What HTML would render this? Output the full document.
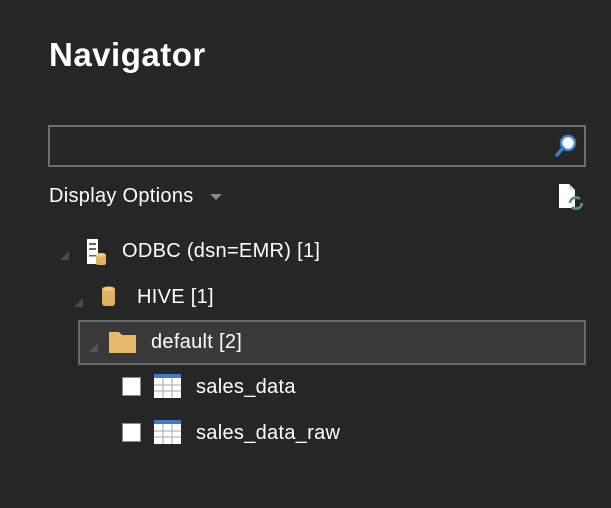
<!DOCTYPE html>
<html><head><meta charset="utf-8"><style>
body{margin:0;width:611px;height:508px;background:#262626;overflow:hidden;font-family:"Liberation Sans",sans-serif;color:#fff;position:relative}
.a{position:absolute}
.t{font-size:20px;white-space:nowrap;letter-spacing:0.3px}
.tri{position:absolute;width:0;height:0;border-left:9px solid transparent;border-bottom:9px solid #4a4a4a}
.cb{position:absolute;width:19px;height:19px;background:#fff;border:1px solid #888;box-sizing:border-box}
</style></head><body>
<div class="a" style="left:49px;top:36px;font-size:33px;font-weight:bold;letter-spacing:0.5px">Navigator</div>
<div class="a" style="left:48px;top:125px;width:538px;height:42px;border:2px solid #6e6e6e;box-sizing:border-box;background:#262626"></div>
<svg class="a" style="left:554px;top:133px" width="24" height="26" viewBox="0 0 24 26"><circle cx="14" cy="10" r="7" fill="#fff" stroke="#3f7fc9" stroke-width="2.5"/><line x1="9" y1="15" x2="3" y2="22" stroke="#3f7fc9" stroke-width="3.5" stroke-linecap="round"/></svg>
<div class="a t" style="left:49px;top:185px">Display Options</div>
<div class="a" style="left:210px;top:194px;width:0;height:0;border-left:6px solid transparent;border-right:6px solid transparent;border-top:6px solid #8a8a8a"></div>
<svg class="a" style="left:556px;top:183px" width="30" height="30" viewBox="0 0 30 30"><path d="M3 1h10l6 6v18H3z" fill="#fff"/><path d="M13 1v6h6" fill="#ddd"/><path d="M14 20a6 6 0 0 1 10-4M26 20a6 6 0 0 1-10 4" fill="none" stroke="#4f9a6a" stroke-width="2.6"/></svg>
<div class="tri" style="left:60px;top:251px"></div>
<svg class="a" style="left:85px;top:238px" width="26" height="28" viewBox="0 0 26 28"><rect x="2" y="1" width="11" height="25" fill="#fff"/><rect x="4" y="5" width="7" height="2" fill="#666"/><rect x="4" y="10" width="7" height="2" fill="#666"/><rect x="4" y="17" width="7" height="1.5" fill="#666"/><rect x="11" y="17" width="10" height="10" rx="2" fill="#e0b262"/><ellipse cx="16" cy="17" rx="5" ry="2" fill="#f1cc85"/></svg>
<div class="a t" style="left:122px;top:240px">ODBC (dsn=EMR) [1]</div>
<div class="tri" style="left:74px;top:298px"></div>
<svg class="a" style="left:100px;top:285px" width="18" height="24" viewBox="0 0 18 24"><rect x="2" y="3" width="13" height="18" rx="3" fill="#e0b262"/><ellipse cx="8.5" cy="4" rx="6.5" ry="2.5" fill="#f0c67d"/></svg>
<div class="a t" style="left:137px;top:286px">HIVE [1]</div>
<div class="a" style="left:78px;top:320px;width:508px;height:45px;border:2px solid #6a6a6a;box-sizing:border-box;background:#393939"></div>
<div class="tri" style="left:89px;top:343px;border-bottom-color:#555"></div>
<svg class="a" style="left:108px;top:329px" width="30" height="26" viewBox="0 0 30 26"><path d="M1 3h10l3 3h14v18H1z" fill="#e8b96a"/></svg>
<div class="a t" style="left:151px;top:331px">default [2]</div>
<div class="cb" style="left:122px;top:377px"></div>
<svg class="a" style="left:154px;top:374px" width="27" height="24" viewBox="0 0 27 24"><rect x="0" y="0" width="27" height="24" fill="#fff"/><rect x="0" y="0" width="27" height="4" fill="#3f7bc9"/><path d="M9 4v20M18 4v20M0 11h27M0 17h27" stroke="#b8b8b8" stroke-width="1.3"/></svg>
<div class="a t" style="left:196px;top:376px">sales_data</div>
<div class="cb" style="left:122px;top:423px"></div>
<svg class="a" style="left:154px;top:420px" width="27" height="24" viewBox="0 0 27 24"><rect x="0" y="0" width="27" height="24" fill="#fff"/><rect x="0" y="0" width="27" height="4" fill="#3f7bc9"/><path d="M9 4v20M18 4v20M0 11h27M0 17h27" stroke="#b8b8b8" stroke-width="1.3"/></svg>
<div class="a t" style="left:196px;top:422px">sales_data_raw</div>
</body></html>
